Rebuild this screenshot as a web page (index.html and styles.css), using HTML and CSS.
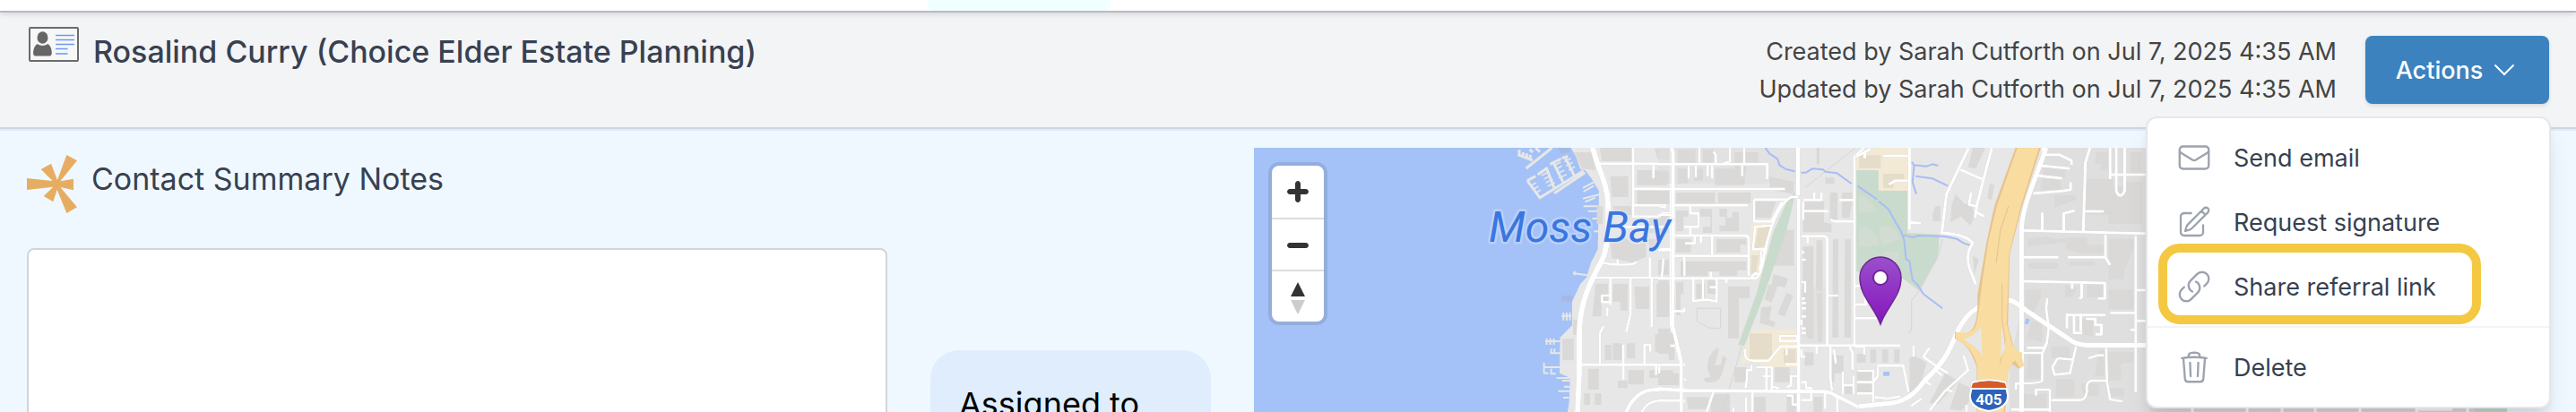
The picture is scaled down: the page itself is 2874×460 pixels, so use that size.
FILE: index.html
```html
<!DOCTYPE html>
<html lang="en">
<head>
<meta charset="utf-8">
<meta name="viewport" content="width=device-width, initial-scale=1">
<title>Rosalind Curry</title>
<link rel="stylesheet" href="styles.css">
</head>
<body>
<div class="app">
  <nav class="tabs" aria-label="Sections"><span class="tab-active"></span></nav>

  <header class="page-header">
    <svg class="id-icon" viewBox="0 0 56 39" aria-hidden="true">
      <rect x="1" y="1" width="54" height="37" rx="1" fill="#f7f7f8" stroke="#6b6b6b" stroke-width="2"/>
      <ellipse cx="15.500" cy="12" rx="6" ry="6.800" fill="#666"/>
      <path d="M9.500 19q6 4 12 0q4 3 4.300 9.500q0 3.500-2 4H7q-2-.5-2-4Q5.500 22 9.500 19z" fill="#666"/>
      <path d="M30 9.500h21M30 14.500h21M30 19.500h21M30 24.500h13.500M30 30h13.500" stroke="#6c97f3" stroke-width="1.600"/>
    </svg>
    <h1 class="page-title">Rosalind Curry (Choice Elder Estate Planning)</h1>
    <div class="meta">
      <div>Created by Sarah Cutforth on Jul 7, 2025 4:35 AM</div>
      <div>Updated by Sarah Cutforth on Jul 7, 2025 4:35 AM</div>
    </div>
    <div class="actions">
      <button class="actions-button" type="button" aria-haspopup="menu" aria-expanded="true">
        Actions
        <svg class="chevron" viewBox="0 0 24 24" aria-hidden="true"><path d="M1.500 6.500 12 17 22.500 6.500"/></svg>
      </button>
      <div class="menu" role="menu">
        <div class="menu-group">
          <button class="menu-item" type="button" role="menuitem">
            <svg class="menu-icon" viewBox="0 0 24 24" aria-hidden="true"><path d="M21.750 6.750v10.500a2.250 2.250 0 0 1-2.250 2.250h-15a2.250 2.250 0 0 1-2.250-2.250V6.750m19.500 0A2.250 2.250 0 0 0 19.500 4.500h-15a2.250 2.250 0 0 0-2.250 2.250m19.500 0v.243a2.250 2.250 0 0 1-1.070 1.916l-7.500 4.615a2.250 2.250 0 0 1-2.360 0L3.320 8.910a2.250 2.250 0 0 1-1.070-1.916V6.750"/></svg>
            Send email
          </button>
          <button class="menu-item" type="button" role="menuitem">
            <svg class="menu-icon" viewBox="0 0 24 24" aria-hidden="true"><path d="m16.862 4.487 1.687-1.688a1.875 1.875 0 1 1 2.652 2.652L10.582 16.070a4.500 4.500 0 0 1-1.897 1.130L6 18l.8-2.685a4.500 4.500 0 0 1 1.130-1.897l8.932-8.931Zm0 0L19.500 7.125M18 14v4.750A2.250 2.250 0 0 1 15.750 21H5.250A2.250 2.250 0 0 1 3 18.750V8.250A2.250 2.250 0 0 1 5.250 6H10"/></svg>
            Request signature
          </button>
          <button class="menu-item is-highlighted" type="button" role="menuitem">
            <svg class="menu-icon" viewBox="0 0 24 24" aria-hidden="true"><path d="M13.190 8.688a4.500 4.500 0 0 1 1.242 7.244l-4.500 4.500a4.500 4.500 0 0 1-6.364-6.364l1.757-1.757m13.350-.622 1.757-1.757a4.500 4.500 0 0 0-6.364-6.364l-4.500 4.500a4.500 4.500 0 0 0 1.242 7.244"/></svg>
            Share referral link
          </button>
        </div>
        <div class="menu-group">
          <button class="menu-item" type="button" role="menuitem">
            <svg class="menu-icon" viewBox="0 0 24 24" aria-hidden="true"><path d="m14.740 9-.346 9m-4.788 0L9.260 9m9.968-3.210c.342.052.682.107 1.022.166m-1.022-.165L18.160 19.673a2.250 2.250 0 0 1-2.244 2.077H8.084a2.250 2.250 0 0 1-2.244-2.077L4.772 5.790m14.456 0a48.108 48.108 0 0 0-3.478-.397m-12 .562c.340-.059.680-.114 1.022-.165m0 0a48.110 48.110 0 0 1 3.478-.397m7.500 0v-.916c0-1.180-.910-2.164-2.090-2.201a51.964 51.964 0 0 0-3.320 0c-1.180.037-2.090 1.022-2.090 2.201v.916m7.500 0a48.667 48.667 0 0 0-7.500 0"/></svg>
            Delete
          </button>
        </div>
      </div>
    </div>
  </header>

  <main class="content">
    <section class="notes">
      <div class="notes-heading">
        <svg class="star-icon" viewBox="0 0 168 195" aria-hidden="true">
          <path fill="#e6ad62" d="M0 78 86 87 47 48 81 29 102 84 133 0 168 19 112 88 156 80V118L112 108 168 175 133 195 101 116 88 157 56 138 88 107 0 117z"/>
        </svg>
        <label class="notes-label" for="notes">Contact Summary Notes</label>
      </div>
      <textarea class="notes-box" id="notes"></textarea>
    </section>

    <aside class="assigned"><h2 class="assigned-title">Assigned to</h2></aside>

    <section class="map" aria-label="Map">
      <svg class="map-canvas" viewBox="0 0 1398 295">
        <defs>
          <linearGradient id="pin" x1="0" y1="0" x2="0" y2="1"><stop offset="0" stop-color="#9a50cc"/><stop offset="1" stop-color="#8615bd"/></linearGradient>
        </defs>
        <rect class="water" width="1398" height="295"/>
        <!-- shoreline and piers -->
        <g transform="matrix(.3333 0 0 .3333 -19 -15)">
          <path class="land" d="M1115 40 1135 75 1150 118 1165 120 1185 145 1212 190 1208 385 1185 430 1170 480 1150 500 1122 560V640L1082 680 1080 800 1115 815 1112 900 1105 940H4300V40z"/>
          <path class="pier" stroke-width="9" d="M968 114 1055 45M940 68 990 87M945 52v18M958 60v15M970 64v15M982 68v15M980 50l10 10M1000 45l14 14M972 155 1014 212 1160 122M972 155 1000 140M1062 197 1165 128M1007 135 1040 112M1035 110 1062 180M1048 100 1085 82M1058 92 1092 160M1088 80 1108 73M1098 75 1130 140"/>
          <path class="pier" stroke-width="5" d="M985 172l16-10M993 184l16-10M1001 196l16-10M1020 138l22-12M1027 150l24-12M1034 162l24-12M1040 174l24-12M1060 105l24-12M1066 118l22-12M1072 132l24-12M1078 146l26-12M1096 92l22-12M1102 106l22-12M1110 120l22-12"/>
          <path class="pier" stroke-width="6" d="M1158 180 1195 160M1160 192 1195 172M1158 215 1212 202M1165 226 1200 212M1160 241H1208M1175 257H1208M1190 282H1210M1195 325H1210M1125 465 1172 472M1130 458v14M1087 608H1120M1093 597v26M1104 597v26M1115 597v26M1032 693H1082M1037 683v22M1049 683v22M1061 683v22M1048 733H1082M1052 718v14M1063 718v14M1025 780H1080M1028 765V800M1028 800h15M1052 785v17h16M1070 816H1115M1088 825H1115M1095 845H1115M1075 860H1115M1092 882H1112"/>
          <path fill="#a6b9e2" d="M1075 45h40v15l-30 5zM1086 540h36v20h-36z"/>
          <g class="building">
            <path d="M1130 60h60l10 60-45-5zM1215 45h105v45H1222zM1250 140h60v70h-55zM1340 120h100v50h-100zM1340 188h110v45h-110zM1398 48h55v35h-45zM1260 240h60v30h-60zM1250 350q50-10 70 10t50-10v60l-45 20-70-15zM1190 240h35v60h-20v-60M1380 270h65v60h-65zM1090 685h38v72h-38zM1200 500h42v60h-22v50h-30zM1258 500h50v90h-25v-30h-25zM1330 510h50v75h-45zM1405 500h48v112h-48zM1258 700h30v55h-30zM1305 700h28v50h-28zM1400 670h40v60h-40zM1175 785h36v70h-36zM1310 790h52v48h-52zM1380 790h80v45h-30v-20h-50zM1162 868h20v38h-20zM1198 868h22v38h-22zM1232 705h22v50h-22zM1125 620h15v52h-15zM1375 350h30v40h-20zM1275 825h32v25h-32z"/>
          </g>
          <g class="road">
            <path stroke-width="18" d="M1190 40C1205 110 1240 160 1242 230 1245 330 1240 390 1220 425 1180 500 1150 560 1146 660V800L1140 940"/>
            <path stroke-width="8" d="M1215 98H1500M1327 45V280M1394 100V148M1330 182H1500M1330 238H1435V248M1330 275H1415L1422 265H1455M1270 310H1455M1415 385H1455M1200 480H1500M1250 480V572M1218 540h30M1222 540v22h28M1318 480V600L1303 662M1388 480V645M1155 772H1500M1294 705V822M1228 642 1215 665V770M1364 770V705H1384V728M1403 772V806M1414 772V828M1225 430Q1260 440 1325 435L1338 427M1274 418V436M1382 412V476M1426 415V445L1422 478M1240 580V610"/>
            <path stroke-width="12" d="M1454 45V640L1487 770V940M1300 940C1320 880 1360 855 1400 855H1500"/>
            <path stroke-width="8" d="M1350 940C1370 900 1390 893 1420 893H1500M1465 595h30"/>
          </g>
        </g>
        <!-- town centre -->
        <g transform="matrix(.3333 0 0 .3333 451 -5)">
          <path fill="#e0e0e0" d="M470 480H560V670H475zM0 15h460v120H0z" opacity=".6"/>
          <g class="building">
            <path d="M65 20h60v45H65zM150 20h35v45H150zM255 30h80v35h-40v30h-40zM65 85h35v50H65zM120 85h30v40h-30zM190 85h100v55H190zM370 110l85 20v40l-80-15zM0 95h35v40H0zM60 165h130v35H60zM200 165h110v35H200zM325 195h70l-20 55h-50zM60 225h40v20H85v50H60zM140 220h40v80h-30v-20h25v-35h-35zM205 220h25v30h18v-20h22v65h-65v-20h20v-30h-20zM60 320h50v45H60zM195 320h100v20h-20v25h-80zM75 395h220v30h-30v20h-60v-15h-40v15H75zM0 390h35v50H0zM425 290h30v120h-75zM385 438l50 15-10 30-25-5-20 55-25-10 15-50h10zM430 500l22 10-28 70-25-8zM345 550 380 545 372 590 393 600 388 615 340 602zM234 480h72v40h-36v133h-36zM60 465h25v40H75v70H60zM0 460h35v120H0zM127 470h30v50h-30zM165 460h30v45h-30zM0 620h40v15h15v90H35v-20H0zM190 685q20 0 10 20l-10 40 20-5 5-30 15 10-20 60q-10 25-50 20l-10-12 25-5-10-30q0-50 35-68zM95 850h75l-5 40h-65zM180 840h60v60h-65zM0 770h70v40H0z"/>
            <path d="M530 15h10v55h-10zM490 195h65v30h-65zM485 230h70v35l25 5v28H485zM575 165h25v90h-25zM615 165h35v25l-10 60h-25zM560 115h30v20h-30zM485 345h35v310h-20l-5-20-12-30 5-40-5-50zM530 325h20v170h-22zM530 500h20v165h-15zM585 320h18v330h-20zM625 320h20v330h-22zM390 750h50v50h-50zM255 750h40v50h-40zM490 700h30v45h-30zM520 850h30v50h-30zM580 710h40v60h-30v30h-12zM665 705h30v30h-30zM710 690h20v45h-20zM750 690h20v45h-20zM790 690h18v45h-18zM665 765h50v30h-50zM665 805h50v30h-50zM625 815h30v25h-30zM320 850h40v50h-40zM430 840h30v60h-30z"/>
          </g>
          <path class="lot" d="M312 265h75l-50 170-30 5zM315 625H465V750H345V735H275zM740 15H810V158H738V90H662V40z"/>
          <path class="lot-dark" d="M335 280h40l-20 65-32 10zM312 375h25l-10 60h-17zM306 637h75v85h-75zM420 690h40v45h-40zM672 40h72v44h-72zM755 105h55v45h-55z"/>
          <path class="park" d="M460 165 430 290 350 520 288 678 268 675 330 500 385 300 435 185z"/>
          <path class="faint" d="M130 553h79v67l-40-2-39-22zM490 150 660 15M280 680 215 900"/>
          <g class="road">
            <path stroke-width="12" d="M44 15 50 30V445L48 610 77 730V900M468 15V175M470 185V900M0 822 77 828 560 832Q580 835 600 848L668 882 750 875"/>
            <path stroke-width="9" d="M470 180H445C400 205 370 290 350 400Q340 450 325 452H0M0 70H365V120M0 153H425M55 208H300M55 309H290Q303 310 303 322V445M55 377H300M58 678H40"/>
            <path stroke-width="9" d="M657 675V45L690 15M480 311H555Q566 312 566 325V675M0 742H77M0 862H77M470 677H810M660 478h30M660 540h35v-50M660 586h100"/>
            <path stroke-width="8" d="M138 15v52M288 15v60M240 15V60L215 70M185 28l8 12V68M102 75V118M126 75V115M166 75V110M181 75V118M281 75V110M321 188V262H378L415 195M321 188H430M0 210 25 215M0 240H50M0 358H50M18 385 12 450M107 210V235H135V280H85M107 280V310M122 310V335H90M143 310V335M181 310V375M88 380V445M176 430V450M229 450V468M118 455V528L165 524 196 530V455M150 455V525M172 482H196M50 562H88V552M378 275 325 280 317 355H365M345 360V400L338 425M350 355 362 370M310 450 325 435 340 440M485 190H550M523 165v25M547 165v25M485 195v62M485 227H570M605 190H655M577 255 590 262H655M500 315V335M480 365h10M480 390h15M480 465h12v35M480 520h12M480 535h15M480 553h15M480 580h15M480 590v20M480 620h14M480 635h15M566 510h38M290 690C290 720 295 728 320 728H370L410 680H470M408 645H465V662H408zM430 685V710M425 740H470M312 742V760H297V790L292 820M330 750H380V825M362 750V825M350 780h25M380 815 405 820M470 780H445V810L430 818M294 850V900M316 835V900M185 835 162 900M252 885V900M85 790 95 792M430 845H450V875H465M478 800H495V820H512V860H478M530 680V705M480 690V705 715H492M577 680V790L582 830M588 690 595 738M640 682 650 700V760M658 680H690V708M618 765V840M618 810H655M654 780V840M559 835V890M599 850V900M668 762H720V870M735 747V780L720 800M665 800H718M665 838H720M735 747H810M725 850 770 855 810 848"/>
          </g>
        </g>
        <!-- park, creek and freeway -->
        <g transform="matrix(.3444 0 0 .3333 461 -15)">
          <path fill="#dfdfdf" d="M1220 40H1700V940H1110V780L1150 560 1150 300z"/>
          <g class="building">
            <path d="M990 45h40l-30 70-25-5zM1045 165l15 5-8 50-15-5zM935 200l30 35 20-10 12 50-15 30-30-30-35 20 5-60zM990 405l20 15-15 50zM870 240h15v50h-25v-25zM1220 110h70v35h-75zM1215 150h60v35h-65zM1255 205h70v15l-70 25zM1390 60h40v60h-25v-20h-20zM1360 150h85v25h35v-15h60v140h-110v-30h-75zM1500 60h35v70h-35zM1165 350l60-8 40 10 30-5v15l-60 5-65 10zM1300 345h60v25h60v30h-70l-60-15zM1170 430h95v20h-95zM1305 425h80v15h-80zM1430 350h80v30l-30 80v25h-50zM1160 520h50v30l-25 50h-25zM1290 505l40 10-20 30h-20zM1360 505h50v40h-50zM1430 520h80v65h-80zM1180 625h35v70l-50-10zM1330 620h50v60l-30-10zM1245 710h60v40h-60zM1400 725h15v85h-30zM1430 730h80v30l-40 10v55h-40zM1170 740h40v80h-50zM1340 835h60v40h-50zM1155 870h75v55h-75zM1260 820h60v60h-60zM1430 850h50v30h-50zM800 740l40 25-15 60-40 60V750zM900 800l45 25-70 80-25-5zM945 830l60 30-50 65-40-5z"/>
          </g>
          <path class="park" d="M613 120H685V188H778V330L882 335 877 415 815 523 760 480 613 460z"/>
          <path fill="#d3dcd2" d="M620 205Q660 205 677 262H620zM622 310Q680 312 686 372L622 378zM685 310Q740 300 755 350L697 372zM700 392h50v30l-40 10z"/>
          <path class="lot" d="M690 45H780V188H685V120H612V80z"/>
          <path class="lot-dark" d="M622 70h70v43h-70zM700 132h68v20h-35v28h-33z"/>
          <path class="faint" d="M892 350 880 400 820 520 792 555V650L783 668"/>
          <path class="creek" d="M318 45 332 65 358 83 364 103 385 117 414 124M434 128H450L470 115 505 118 512 125 550 130 597 165M617 173 680 218M686 224 718 252 740 295 758 325 768 355 774 418 785 425 795 488 812 505 830 535 892 583M760 335 795 345 815 339 900 342 938 350 960 364 985 373M793 92 800 105 795 160 807 200M800 103 840 107 860 100 878 105M805 140 860 148 910 173"/>
          <path fill="#a4c4f8" d="M1163 615 1175 620 1170 635H1158zM700 795h20v14h-20z"/>
          <g class="road">
            <path stroke-width="9" d="M785 45V318M785 295 822 298M977 45 905 200 890 330Q970 335 990 365 965 400 980 450L1000 503M950 118 1020 150M1052 45 1020 170 1002 245M985 195 978 235 1003 242 997 280M1003 262 1028 275M612 75 660 48M640 60v20M700 72H780M718 168 740 155H780"/>
            <path stroke-width="9" d="M1145 322 1550 332M1370 45 1355 95 1348 325M1435 45V150M1435 135H1550M1455 45V190Q1467 220 1482 190V45M1215 45l10 23h45l40 20v15M1210 105 1305 115M1200 138 1280 148M1185 198 1280 190 1307 185V160M1215 262V322M1285 322V265L1320 255M1350 258H1415M1150 412H1268M1298 412H1420V335M1420 412 1435 438M1518 340V865M1150 492 1418 498V550H1395M1312 500V518M1343 500V545L1335 550M1520 522h30M1520 625h30M1435 598H1515M1500 655H1515M1295 600V650M1293 605H1420M1318 605V665H1345M1340 605V660M1357 618h30v20h20v32h-20"/>
            <path stroke-width="8" d="M1232 548 1228 580 1236 650 1230 700 1215 735V825Q1210 835 1130 835V855M1165 715H1225V700M1150 732H1215M1265 750 1248 780 1255 805 1305 800 1325 710M1265 750 1318 755M1422 715 1425 830 1435 888 1475 895M1425 825H1375Q1355 830 1360 860 1355 890 1340 890H1245M1240 855V930M1240 855H1195V875M1115 922H1240M1365 750 1395 740H1415M798 708V745M680 775H765L782 865M850 715 830 745 875 778 910 800M840 830 855 840M960 740 975 790 900 860 850 925M865 785 890 808M905 855 925 862M825 885 790 910M970 905v25"/>
            <path stroke-width="15" d="M1228 45C1190 160 1150 240 1148 320V930"/>
            <path stroke-width="16" d="M620 912 730 900Q790 890 830 830C890 770 910 740 940 660 970 600 1000 575 1060 560S1130 565 1170 595L1300 685Q1325 706 1360 706H1560"/>
          </g>
          <path fill="#e6c391" d="M1130 40H1212L1150 240 1110 400 1104 640 1125 720 1155 775 1140 785 1105 760 1095 935H1003V780C980 710 960 700 932 685V660C980 680 1010 660 1005 540L1035 360 1060 240z"/>
          <path class="highway" d="M1136 40H1206L1146 240 1108 400 1100 635 1118 705 1130 720 1150 732V750L1156 773 1142 782 1128 758Q1108 765 1100 830L1090 935H1005V780C1000 740 970 700 935 687L934 662C990 670 1000 660 1008 600L1020 500 1040 360 1068 240z"/>
          <path fill="none" stroke="#e6c391" stroke-width="3" d="M1085 500V620L1095 690 1078 770M1106 240 1080 320 1066 430"/>
          <path class="land" d="M960 688Q1000 672 1017 645L1021 740Q1000 710 960 688zM1084 640 1095 715 1080 750z"/>
        </g>
        <!-- blocks along the lower edge -->
        <g>
          <path fill="#dcdcdc" d="M1000 288h398v7H1000z"/>
          <path stroke="#fff" stroke-width="3" d="M1047 280v15M1108 280v15M1147 280v15M1184 280v15M1234 280v15M1297 292h40M1297 280v15M1354 280v15"/>
          <path class="park" d="M1362 280h36v15h-36z"/>
        </g>
        <text class="place" x="262" y="105">Moss Bay</text>
        <!-- interstate shield -->
        <path d="M802 262q18-5 36 0l3 14q1 14-21 18-22-4-21-18z" fill="#2f63ba" stroke="#fff" stroke-width="2"/>
        <path d="M802 263q18-5 36 0l2 6h-40z" fill="#d95a25"/>
        <path d="M800 269h40" stroke="#fff" stroke-width="2"/>
        <text class="shield" x="820" y="287">405</text>
        <!-- location pin -->
        <path d="M699 197C692 177 676 166 676 145A23 23 0 0 1 722 145C722 166 706 177 699 197z" fill="url(#pin)" stroke="#6d2895" stroke-width="1.500"/>
        <circle cx="699" cy="145" r="8" fill="#fff" stroke="#6d2895" stroke-width="2"/>
      </svg>
      <div class="zoom">
        <button class="zoom-button" type="button" aria-label="Zoom in"><svg viewBox="0 0 29 29"><path d="M14.500 8.500c-.75 0-1.500.75-1.500 1.500v3h-3c-.75 0-1.500.75-1.500 1.500S9.250 16 10 16h3v3c0 .75.75 1.500 1.500 1.500S16 19.750 16 19v-3h3c.75 0 1.500-.75 1.500-1.500S19.750 13 19 13h-3v-3c0-.75-.75-1.500-1.500-1.500z"/></svg></button>
        <button class="zoom-button" type="button" aria-label="Zoom out"><svg viewBox="0 0 29 29"><path d="M10 13c-.75 0-1.500.75-1.500 1.500S9.250 16 10 16h9c.75 0 1.500-.75 1.500-1.500S19.750 13 19 13h-9z"/></svg></button>
        <button class="zoom-button" type="button" aria-label="Reset north"><svg viewBox="0 0 29 29"><path d="M10.500 14l4-8 4 8h-8z"/><path fill="#ccc" d="M10.500 16l4 8 4-8h-8z"/></svg></button>
      </div>
    </section>
  </main>
</div>
</body>
</html>
```

FILE: styles.css
```css
*, *::after { box-sizing: border-box; }

body {
  margin: 0;
  font-family: Inter, "Liberation Sans", sans-serif;
  font-size: 28px;
  color: #374151;
  background: #f0f8ff;
}

button { font: inherit; cursor: pointer; }

.app {
  display: flex;
  flex-direction: column;
  height: 100vh;
  overflow: hidden;
}

.tabs {
  position: relative;
  z-index: 1;
  flex: none;
  display: flex;
  height: 14px;
  padding-left: 36%;
  background: #fff;
  border-bottom: 2px solid #b7bac4;
  box-shadow: 0 2px 6px rgba(0, 0, 0, .12);
}

.tab-active {
  width: 204px;
  background: #f0ffff;
  border-radius: 0 0 8px 8px;
}

.page-header {
  flex: none;
  display: flex;
  align-items: flex-start;
  height: 132px;
  padding: 16px 30px 0 32px;
  background: #f3f4f6;
  border-bottom: 2px solid #dbeafe;
  box-shadow: inset 0 -2px #d1d5db;
}

.id-icon { flex: none; width: 56px; height: 39px; }

.page-title {
  flex: 1;
  margin: 6px 0 0 16px;
  font-size: 34px;
  font-weight: 500;
  line-height: 44px;
}

.meta {
  margin: 7px 32px 0 0;
  font-size: 27px;
  line-height: 42px;
  text-align: right;
  color: #444;
}

.actions { position: relative; padding-top: 10px; }

.actions-button {
  display: flex;
  align-items: center;
  justify-content: center;
  gap: 12px;
  width: 205px;
  height: 76px;
  padding: 0 4px 0 0;
  color: #fff;
  font-weight: 500;
  font-size: 27px;
  background: #3b82bf;
  border: 0;
  border-radius: 8px;
  box-shadow: 0 2px 4px rgba(0, 0, 0, .12);
}

.chevron {
  width: 24px;
  height: 24px;
  fill: none;
  stroke: #fff;
  stroke-width: 2;
}

.menu {
  position: absolute;
  z-index: 2;
  top: 100%;
  right: -2px;
  width: 452px;
  margin-top: 14px;
  background: #fff;
  border: 2px solid #e5e7eb;
  border-radius: 12px;
  box-shadow: 0 20px 30px -6px rgba(0, 0, 0, .1), 0 8px 12px -4px rgba(0, 0, 0, .1);
}

.menu-group { padding: 8px 0; }
.menu-group + .menu-group { border-top: 2px solid #f3f4f6; }

.menu-item {
  position: relative;
  display: flex;
  align-items: center;
  gap: 24px;
  width: 100%;
  height: 72px;
  padding: 0 32px;
  color: #374151;
  font-size: 27px;
  background: none;
  border: 0;
}

.menu-icon {
  width: 40px;
  height: 40px;
  fill: none;
  stroke: #9ca3af;
  stroke-width: 1.4;
  stroke-linecap: round;
  stroke-linejoin: round;
}

.is-highlighted::after {
  content: "";
  position: absolute;
  top: -12px;
  left: 12px;
  width: 360px;
  height: 90px;
  border: 10px solid #f5c842;
  border-radius: 24px;
}

.content {
  flex: 1;
  min-height: 0;
  display: grid;
  grid-template-columns: 960fr 313fr 1398fr;
  gap: 48px;
  padding: 19px 77px 0 30px;
}

.notes { display: flex; flex-direction: column; }

.notes-heading {
  display: flex;
  align-items: center;
  gap: 16px;
  height: 80px;
  margin-bottom: 32px;
}

.star-icon { width: 56px; height: 65px; }

.notes-label {
  padding-bottom: 10px;
  font-size: 34px;
  line-height: 44px;
}

.notes-box {
  flex: 1;
  width: 100%;
  min-height: 320px;
  padding: 16px;
  font: inherit;
  background: #fff;
  border: 2px solid #d1d5db;
  border-radius: 8px;
  resize: none;
}

.assigned {
  min-height: 240px;
  margin-top: 226px;
  padding: 36px 32px;
  background: #dfedfc;
  border-radius: 32px;
}

.assigned-title {
  margin: 0;
  font-size: 36px;
  font-weight: 400;
  line-height: 48px;
  color: #000;
}

.map { position: relative; align-self: start; overflow: hidden; }
.map-canvas { display: block; width: 100%; height: auto; }

.water { fill: #a4c2f7; }
.land { fill: #e7e7e7; }
.building { fill: #dad9d7; }
.park { fill: #c9dbcc; }
.lot { fill: #f3ead6; }
.lot-dark { fill: #e5dcc9; }
.highway { fill: #f8dca0; }
.pier { fill: none; stroke: #e7e7e7; }
.faint { fill: none; stroke: #d6d6d6; stroke-width: 3; }
.creek { fill: none; stroke: #a9bdf5; stroke-width: 6; stroke-linejoin: round; }
.road {
  fill: none;
  stroke: #fff;
  stroke-linejoin: round;
  filter: drop-shadow(0 0 2px #bbb);
}

.place {
  font: italic 48px Roboto, sans-serif;
  fill: #3a76e0;
  stroke: rgba(220, 232, 255, .4);
  stroke-width: 5px;
  stroke-linejoin: round;
  paint-order: stroke;
}

.shield {
  font: bold 17px Roboto, sans-serif;
  fill: #fff;
  text-anchor: middle;
}

.zoom {
  position: absolute;
  top: 20px;
  left: 20px;
  overflow: hidden;
  background: #fff;
  border-radius: 8px;
  box-shadow: 0 0 0 4px rgba(0, 0, 0, .1);
}

.zoom-button {
  display: block;
  width: 58px;
  height: 58px;
  padding: 0;
  background: none;
  border: 0;
}
.zoom-button + .zoom-button { border-top: 2px solid #ddd; }
.zoom-button svg { display: block; width: 58px; height: 58px; fill: #333; }
```
